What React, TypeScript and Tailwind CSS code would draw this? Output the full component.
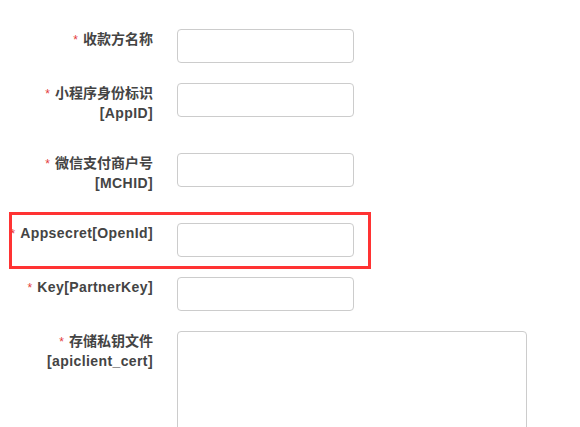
import React from "react";

type Row = { lines: string[]; area?: boolean; marked?: boolean };

const rows: Row[] = [
  { lines: ["收款方名称"] },
  { lines: ["小程序身份标识", "[AppID]"] },
  { lines: ["微信支付商户号", "[MCHID]"] },
  { lines: ["Appsecret[OpenId]"], marked: true },
  { lines: ["Key[PartnerKey]"] },
  { lines: ["存储私钥文件", "[apiclient_cert]"], area: true },
];

function Label({ lines }: { lines: string[] }) {
  return (
    <label className="w-[153px] shrink-0 pb-[10px] text-right text-[14px] font-bold leading-[20px] text-[#444]">
      {lines.map((line, i) => (
        <span key={i} className="block h-[20px] overflow-visible whitespace-nowrap">
          {i === 0 && <span className="mr-[5px] text-[12px] font-normal text-[#e43c3c]">*</span>}
          <span className={/[\u4e00-\u9fff]/.test(line) ? "" : "tracking-[0.4px]"}>{line}</span>
        </span>
      ))}
    </label>
  );
}

export default function App() {
  return (
    <main
      className="h-screen overflow-hidden bg-white pt-[29px]"
      style={{ fontFamily: '"Liberation Sans", "Noto Sans CJK SC", sans-serif' }}
    >
      {rows.map((row, i) => (
        <div key={i} className="relative mb-[20px] flex items-start gap-[24px]">
          <Label lines={row.lines} />
          {row.area ? (
            <textarea className="h-[140px] w-[350px] resize-none rounded-[4px] border border-[#ccc] bg-white" />
          ) : (
            <input className="h-[34px] w-[177px] rounded-[4px] border border-[#ccc] bg-white" />
          )}
          {row.marked && (
            <div className="pointer-events-none absolute left-[9px] top-[-11px] h-[57px] w-[362px] border-[3px] border-[#f33]" />
          )}
        </div>
      ))}
    </main>
  );
}
